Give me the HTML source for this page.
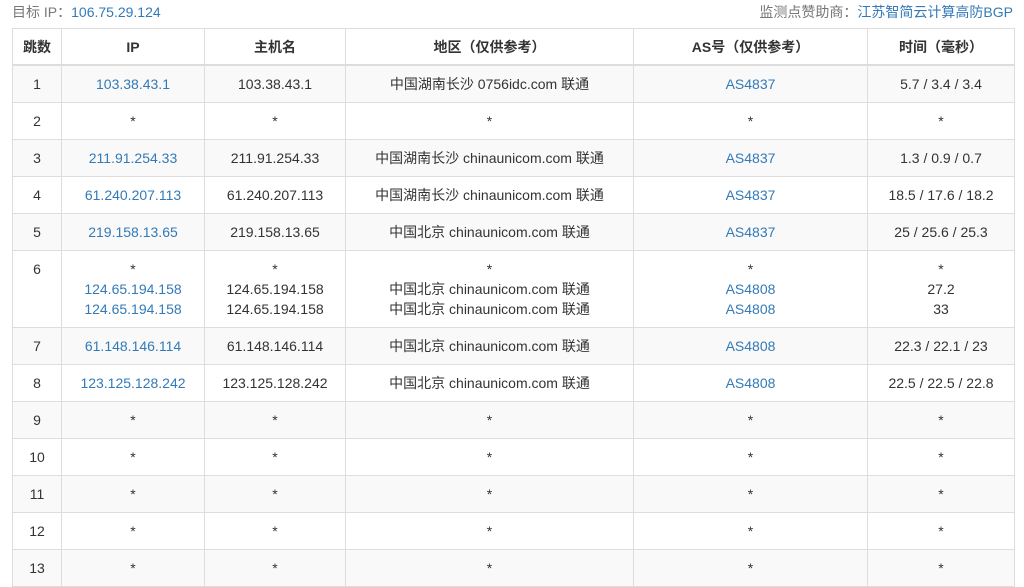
<!DOCTYPE html>
<html><head><meta charset="utf-8"><style>
body{margin:0;background:#fff;font-family:"Liberation Sans","Noto Sans CJK SC",sans-serif;font-size:14px;color:#333;width:1024px;height:577px;overflow:hidden}
.top{position:absolute;top:2px;left:12px;right:11px;height:20px;line-height:20px;color:#777}
.top .r{position:absolute;right:0;top:0}
a{color:#337ab7;text-decoration:none}
table{position:absolute;top:28px;left:12px;width:1002px;border-collapse:collapse;table-layout:fixed}
td,th{border:1px solid #ddd;text-align:center;padding:8px 4px;line-height:20px;height:20px;vertical-align:top}
th{font-weight:bold;border-bottom:2px solid #ddd;padding:8px 4px 7px}
tr.g td{background:#f9f9f9}
</style></head><body>
<div class="top">目标 IP：<a>106.75.29.124</a><span class="r">监测点赞助商：<a>江苏智简云计算高防BGP</a></span></div>
<table>
<colgroup><col style="width:49px"><col style="width:143px"><col style="width:141px"><col style="width:288px"><col style="width:234px"><col style="width:147px"></colgroup>
<tr><th>跳数</th><th>IP</th><th>主机名</th><th>地区（仅供参考）</th><th>AS号（仅供参考）</th><th>时间（毫秒）</th></tr>
<tr class="g"><td>1</td><td><a>103.38.43.1</a></td><td>103.38.43.1</td><td>中国湖南长沙 0756idc.com 联通</td><td><a>AS4837</a></td><td>5.7 / 3.4 / 3.4</td></tr>
<tr><td>2</td><td>*</td><td>*</td><td>*</td><td>*</td><td>*</td></tr>
<tr class="g"><td>3</td><td><a>211.91.254.33</a></td><td>211.91.254.33</td><td>中国湖南长沙 chinaunicom.com 联通</td><td><a>AS4837</a></td><td>1.3 / 0.9 / 0.7</td></tr>
<tr><td>4</td><td><a>61.240.207.113</a></td><td>61.240.207.113</td><td>中国湖南长沙 chinaunicom.com 联通</td><td><a>AS4837</a></td><td>18.5 / 17.6 / 18.2</td></tr>
<tr class="g"><td>5</td><td><a>219.158.13.65</a></td><td>219.158.13.65</td><td>中国北京 chinaunicom.com 联通</td><td><a>AS4837</a></td><td>25 / 25.6 / 25.3</td></tr>
<tr><td>6</td><td>*<br><a>124.65.194.158</a><br><a>124.65.194.158</a></td><td>*<br>124.65.194.158<br>124.65.194.158</td><td>*<br>中国北京 chinaunicom.com 联通<br>中国北京 chinaunicom.com 联通</td><td>*<br><a>AS4808</a><br><a>AS4808</a></td><td>*<br>27.2<br>33</td></tr>
<tr class="g"><td>7</td><td><a>61.148.146.114</a></td><td>61.148.146.114</td><td>中国北京 chinaunicom.com 联通</td><td><a>AS4808</a></td><td>22.3 / 22.1 / 23</td></tr>
<tr><td>8</td><td><a>123.125.128.242</a></td><td>123.125.128.242</td><td>中国北京 chinaunicom.com 联通</td><td><a>AS4808</a></td><td>22.5 / 22.5 / 22.8</td></tr>
<tr class="g"><td>9</td><td>*</td><td>*</td><td>*</td><td>*</td><td>*</td></tr>
<tr><td>10</td><td>*</td><td>*</td><td>*</td><td>*</td><td>*</td></tr>
<tr class="g"><td>11</td><td>*</td><td>*</td><td>*</td><td>*</td><td>*</td></tr>
<tr><td>12</td><td>*</td><td>*</td><td>*</td><td>*</td><td>*</td></tr>
<tr class="g"><td>13</td><td>*</td><td>*</td><td>*</td><td>*</td><td>*</td></tr>
</table>
</body></html>
